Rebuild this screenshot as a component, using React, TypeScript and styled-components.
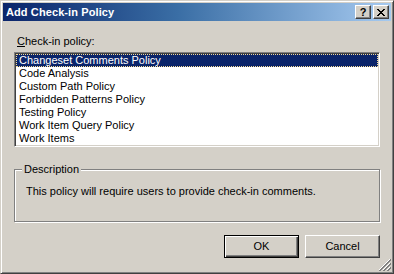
import React from "react";
import styled, { createGlobalStyle } from "styled-components";

const Global = createGlobalStyle`
  html, body { margin: 0; padding: 0; background: #d4d0c8; }
  body { width: 394px; height: 274px; overflow: hidden; }
  * { box-sizing: border-box; }
`;

const FONT = `"Liberation Sans", Arial, sans-serif`;

const Window = styled.div`
  position: relative;
  width: 394px;
  height: 274px;
  display: flex;
  flex-direction: column;
  background: #d4d0c8;
  border: 1px solid;
  border-color: #d4d0c8 #404040 #404040 #d4d0c8;
  box-shadow: inset 1px 1px 0 #ffffff, inset -1px -1px 0 #808080;
  padding: 2px;
  font-family: ${FONT};
  font-size: 11px;
  color: #000;
`;

const TitleBar = styled.div`
  height: 18px;
  display: flex;
  align-items: center;
  padding: 0 2px 0 3px;
  background: linear-gradient(to right, #0a246a 0%, #3a6ea5 45%, #a6caf0 100%);
`;

const Title = styled.div`
  flex: 1;
  color: #fff;
  font-weight: bold;
  font-size: 11px;
  line-height: 13px;
  letter-spacing: 0.1px;
`;

const CaptionButton = styled.div<{ $gap?: number }>`
  width: 16px;
  height: 14px;
  margin-left: ${(p) => p.$gap ?? 0}px;
  background: #d4d0c8;
  border: 1px solid;
  border-color: #ffffff #404040 #404040 #ffffff;
  box-shadow: inset -1px -1px 0 #808080;
  display: flex;
  align-items: center;
  justify-content: center;
  font-weight: bold;
  font-size: 11px;
  line-height: 11px;
  color: #000;
`;

const Body = styled.div`
  flex: 1;
  display: flex;
  flex-direction: column;
  padding: 14px 11px 0 11px;
`;

const Label = styled.div`
  line-height: 13px;
  margin-left: 3px;
  u { text-decoration: underline; }
`;

const ListBox = styled.div`
  margin-top: 4px;
  height: 95px;
  background: #fff;
  border: 1px solid;
  border-color: #808080 #ffffff #ffffff #808080;
  box-shadow: inset 1px 1px 0 #404040, inset -1px -1px 0 #d4d0c8;
  padding: 1px;
  display: flex;
  flex-direction: column;
`;

const Item = styled.div<{ $selected?: boolean }>`
  height: 13px;
  line-height: 11px;
  padding: 0 0 0 2px;
  white-space: nowrap;
  background: ${(p) => (p.$selected ? "#0a246a" : "transparent")};
  color: ${(p) => (p.$selected ? "#fff" : "#000")};
  border: 1px ${(p) => (p.$selected ? "dotted #f5db95" : "solid transparent")};
`;

const GroupBox = styled.fieldset`
  margin: 16px 0 0 0;
  height: 59px;
  padding: 0 6px 0 7px;
  border: 1px solid #808080;
  box-shadow: inset 1px 1px 0 #ffffff, 1px 1px 0 #ffffff;
  min-width: 0;
`;

const Legend = styled.legend`
  padding: 0 2px;
  line-height: 13px;
  background: #d4d0c8;
`;

const Description = styled.p`
  margin: 9px 0 0 4px;
  line-height: 13px;
`;

const ButtonRow = styled.div`
  display: flex;
  justify-content: flex-end;
  gap: 6px;
  margin-top: 13px;
`;

const Button = styled.div<{ $default?: boolean }>`
  width: 75px;
  height: 23px;
  display: flex;
  align-items: center;
  justify-content: center;
  background: #d4d0c8;
  border: 1px solid;
  border-color: ${(p) =>
    p.$default ? "#000000" : "#ffffff #404040 #404040 #ffffff"};
  box-shadow: ${(p) =>
    p.$default
      ? "inset 1px 1px 0 #ffffff, inset -1px -1px 0 #404040, inset -2px -2px 0 #808080"
      : "inset -1px -1px 0 #808080"};
  line-height: 13px;
`;

const Grip = styled.svg`
  position: absolute;
  right: 2px;
  bottom: 2px;
`;

const items = [
  "Changeset Comments Policy",
  "Code Analysis",
  "Custom Path Policy",
  "Forbidden Patterns Policy",
  "Testing Policy",
  "Work Item Query Policy",
  "Work Items",
];

export default function App() {
  return (
    <>
      <Global />
      <Window>
        <TitleBar>
          <Title>Add Check-in Policy</Title>
          <CaptionButton>?</CaptionButton>
          <CaptionButton $gap={2}>
            <svg width="8" height="7" viewBox="0 0 8 7" shapeRendering="crispEdges">
              <path
                d="M0 0h2v1H0zM6 0h2v1H6zM1 1h2v1H1zM5 1h2v1H5zM2 2h4v1H2zM3 3h2v1H3zM2 4h4v1H2zM1 5h2v1H1zM5 5h2v1H5zM0 6h2v1H0zM6 6h2v1H6z"
                fill="#000"
              />
            </svg>
          </CaptionButton>
        </TitleBar>
        <Body>
          <Label>
            <u>C</u>heck-in policy:
          </Label>
          <ListBox>
            {items.map((it, i) => (
              <Item key={it} $selected={i === 0}>
                {it}
              </Item>
            ))}
          </ListBox>
          <GroupBox>
            <Legend>Description</Legend>
            <Description>
              This policy will require users to provide check-in comments.
            </Description>
          </GroupBox>
          <ButtonRow>
            <Button $default>OK</Button>
            <Button>Cancel</Button>
          </ButtonRow>
        </Body>
        <Grip width="12" height="12" viewBox="0 0 12 12" shapeRendering="crispEdges">
          <g strokeWidth="1">
            <path d="M11 0L0 11" stroke="#ffffff" />
            <path d="M12 0L0 12M12 1L1 12" stroke="#808080" />
            <path d="M11 4L4 11" stroke="#ffffff" />
            <path d="M12 4L4 12M12 5L5 12" stroke="#808080" />
            <path d="M11 8L8 11" stroke="#ffffff" />
            <path d="M12 8L8 12M12 9L9 12" stroke="#808080" />
          </g>
        </Grip>
      </Window>
    </>
  );
}
